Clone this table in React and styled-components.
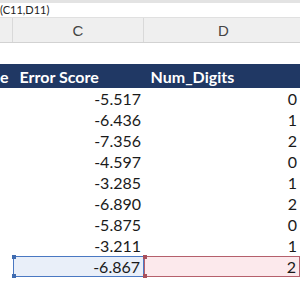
import React from "react";
import styled, { createGlobalStyle } from "styled-components";

const GlobalStyle = createGlobalStyle`
  body {
    margin: 0;
    background: #ffffff;
    font-family: Lato, "Liberation Sans", sans-serif;
    overflow: hidden;
  }
`;

const rows = [
  { score: "-5.517", digits: 0 },
  { score: "-6.436", digits: 1 },
  { score: "-7.356", digits: 2 },
  { score: "-4.597", digits: 0 },
  { score: "-3.285", digits: 1 },
  { score: "-6.890", digits: 2 },
  { score: "-5.875", digits: 0 },
  { score: "-3.211", digits: 1 },
  { score: "-6.867", digits: 2, selected: true },
];

const Sheet = styled.div`
  width: 300px;
  height: 300px;
  overflow: hidden;
  background: #ffffff;
`;

const FormulaBar = styled.div`
  height: 14px;
  border-top: 3px solid #e3e3e3;
  background: #ffffff;
  font-size: 11px;
  line-height: 14px;
  color: #222;
  white-space: nowrap;
`;

const ColumnHeaders = styled.div`
  display: flex;
  height: 24px;
  margin-top: 0;
  border-top: 1px solid #e0e0e0;
  border-bottom: 1px solid #d2d2d2;
  background: #efefef;
`;

const ColumnLetter = styled.div`
  flex: 0 0 ${({ w }) => w}px;
  display: flex;
  align-items: center;
  justify-content: center;
  border-right: 1px solid #d9d9d9;
  font-family: "Liberation Sans", sans-serif;
  font-size: 15px;
  color: #444;
  box-sizing: border-box;
`;

const Row = styled.div`
  display: flex;
  height: ${({ h }) => h || 21}px;
  background: ${({ head }) => (head ? "#203864" : "transparent")};
`;

const Cell = styled.div`
  position: relative;
  flex: 0 0 ${({ w }) => w}px;
  box-sizing: border-box;
  display: flex;
  align-items: center;
  justify-content: ${({ left }) => (left ? "flex-start" : "flex-end")};
  padding: 0 3px 0 4px;
  font-size: 16px;
  font-weight: ${({ head }) => (head ? 700 : 400)};
  color: ${({ head }) => (head ? "#ffffff" : "#1a1a1a")};
  white-space: nowrap;
  overflow: visible;
  background: ${({ mark }) =>
    mark === "blue" ? "#e9eff9" : mark === "red" ? "#fce9ec" : "transparent"};
  border: ${({ mark }) =>
    mark === "blue"
      ? "1px solid #4a78c2"
      : mark === "red"
      ? "1px solid #b5606c"
      : "none"};
`;

const Handle = styled.span`
  position: absolute;
  left: -2px;
  ${({ pos }) => (pos === "top" ? "top: -2px;" : "bottom: -2px;")}
  width: 4px;
  height: 4px;
  background: ${({ c }) => c};
`;

const cols = { b: 13, c: 131, d: 160 };

export default function App() {
  return (
    <Sheet>
      <GlobalStyle />
      <FormulaBar>(C11,D11)</FormulaBar>
      <ColumnHeaders>
        <ColumnLetter w={cols.b} />
        <ColumnLetter w={cols.c}>C</ColumnLetter>
        <ColumnLetter w={cols.d}>D</ColumnLetter>
      </ColumnHeaders>
      <Row />
      <Row head h={24}>
        <Cell w={cols.b} head left style={{ justifyContent: "flex-end", padding: 0 }}>
          <span style={{ marginRight: 7 }}>e</span>
        </Cell>
        <Cell w={cols.c} head left>Error Score</Cell>
        <Cell w={cols.d} head left>Num_Digits</Cell>
      </Row>
      {rows.map((r) => (
        <Row key={r.score}>
          <Cell w={cols.b} />
          <Cell w={cols.c} mark={r.selected ? "blue" : undefined}>
            {r.score}
            {r.selected && <Handle pos="top" c="#3f6bb0" />}
            {r.selected && <Handle pos="bottom" c="#3f6bb0" />}
          </Cell>
          <Cell w={cols.d - 4} mark={r.selected ? "red" : undefined}>
            {r.digits}
            {r.selected && <Handle pos="top" c="#a8505c" />}
            {r.selected && <Handle pos="bottom" c="#a8505c" />}
          </Cell>
        </Row>
      ))}
    </Sheet>
  );
}
